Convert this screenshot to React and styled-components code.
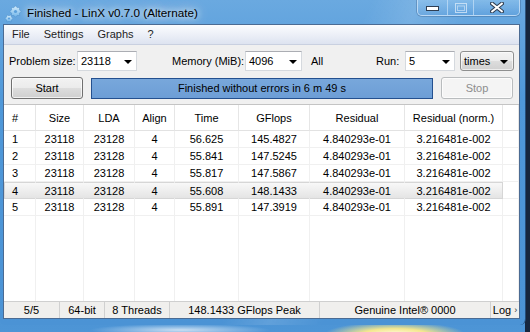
import React from 'react';
import styled, { createGlobalStyle } from 'styled-components';

const GlobalStyle = createGlobalStyle`
  html, body { margin: 0; padding: 0; }
  body {
    width: 530px; height: 332px; overflow: hidden;
    font-family: "Liberation Sans", Arial, sans-serif;
    font-size: 11px; color: #000;
  }
  * { box-sizing: border-box; }
`;

const Desktop = styled.div`
  width: 530px; height: 332px; overflow: hidden;
  background:
    radial-gradient(ellipse 70px 12px at 395px 334px, #fffbe0 0%, #f4e78e 45%, rgba(244,231,142,0) 100%),
    radial-gradient(ellipse 90px 6px at 180px 330px, rgba(255,255,255,0.7) 0%, rgba(255,255,255,0) 100%),
    linear-gradient(90deg, rgba(0,0,0,0) 525px, #16263d 525px),
    linear-gradient(180deg, #3b80c4 0%, #4d95d6 100%);
`;

const Window = styled.div`
  width: 526px; height: 325px;
  display: flex; flex-direction: column;
  padding-bottom: 6px;
  border-radius: 0 0 6px 6px;
  border-right: 1px solid rgba(10, 30, 60, 0.6);
  background:
    linear-gradient(115deg, rgba(255,255,255,0) 55%, rgba(255,255,255,0.12) 62%, rgba(255,255,255,0) 70%),
    linear-gradient(180deg, #6aa9e0 0%, #4f98d9 30%, #4b93d5 100%);
`;

const TitleBar = styled.div`
  height: 24px; flex: none;
  display: flex; align-items: flex-start;
  padding-left: 4px;
`;

const AppIcon = styled.svg`
  width: 18px; height: 18px; margin-top: 5px; flex: none;
`;

const Title = styled.div`
  margin-left: 5px; margin-top: 5px;
  font-size: 11.7px; line-height: 15px; color: #000;
  white-space: nowrap;
  text-shadow: 0 0 6px rgba(255,255,255,0.95), 0 0 12px rgba(255,255,255,0.85), 0 0 16px rgba(255,255,255,0.6);
`;

const Controls = styled.div`
  margin-left: auto; margin-right: 5px;
  display: flex; height: 16px;
  border: 1px solid rgba(200, 225, 248, 0.85); border-top: none;
  border-radius: 0 0 5px 5px;
  overflow: hidden;
  box-shadow: 0 0 0 1px rgba(30, 60, 100, 0.25);
`;

const CtrlButton = styled.div`
  width: ${p => p.$w}px; height: 100%;
  display: flex; align-items: center; justify-content: center;
  background: linear-gradient(180deg, rgba(150, 200, 240, 0.55) 0%, rgba(90, 155, 220, 0.35) 100%);
  & + & { border-left: 1px solid rgba(200, 225, 248, 0.7); }
`;

const Client = styled.div`
  flex: 1; margin: 0 5px 0 3px;
  display: flex; flex-direction: column;
  border: 1px solid #4b6b93;
  background: #f0f0f0;
  min-height: 0;
`;

const MenuBar = styled.div`
  height: 20px; flex: none;
  display: flex; align-items: center;
  padding-left: 1px;
  background: linear-gradient(180deg, #fbfcfe 0%, #eef1f8 45%, #dde3f0 100%);
  border-bottom: 1px solid #c9d0e0;
`;

const MenuItem = styled.span`
  padding: 0 7px; color: #1e1e1e; line-height: 19px;
`;

const Toolbar = styled.div`
  flex: none; display: flex; flex-direction: column;
  gap: 6px; padding: 6px 0 5px;
`;

const Row = styled.div`
  display: flex; align-items: center;
  height: ${p => p.$h}px;
  padding-left: ${p => p.$pl}px;
  gap: ${p => p.$gap || 0}px;
`;

const Label = styled.span`
  width: ${p => p.$w}px; margin-left: ${p => p.$ml || 0}px;
  flex: none; white-space: nowrap; color: #000;
`;

const Combo = styled.div`
  width: ${p => p.$w}px; height: 20px; flex: none;
  display: flex; align-items: center; justify-content: space-between;
  padding: 0 4px 0 3px;
  background: #fff;
  border: 1px solid #d5d9de; border-top-color: #abadb3;
`;

const Arrow = styled.span`
  width: 0; height: 0;
  border-left: 4px solid transparent; border-right: 4px solid transparent;
  border-top: 4px solid #000;
  margin-top: 1px;
`;

const DropList = styled.div`
  width: ${p => p.$w}px; height: 20px; flex: none; margin-left: ${p => p.$ml || 0}px;
  display: flex; align-items: center; justify-content: space-between;
  padding: 0 5px 0 3px;
  border: 1px solid #8e8f8f; border-radius: 3px;
  background: linear-gradient(180deg, #f3f3f3 0%, #ebebeb 50%, #dddddd 51%, #d0d0d0 100%);
  box-shadow: inset 0 0 0 1px rgba(255,255,255,0.6);
`;

const Button = styled.div`
  width: 72px; height: 22px; flex: none;
  display: flex; align-items: center; justify-content: center;
  border-radius: 3px;
  border: 1px solid ${p => (p.$disabled ? '#b9bcbe' : '#707070')};
  color: ${p => (p.$disabled ? '#8d8d8d' : '#000')};
  background: ${p => (p.$disabled
    ? '#f4f4f4'
    : 'linear-gradient(180deg, #f2f2f2 0%, #ebebeb 50%, #dddddd 51%, #cfcfcf 100%)')};
  box-shadow: inset 0 0 0 1px rgba(255,255,255,0.7);
`;

const Progress = styled.div`
  width: 342px; height: 21px; flex: none;
  display: flex; align-items: center; justify-content: center;
  border: 1px solid #24508f;
  background: linear-gradient(180deg, #78a7db 0%, #6d9ed6 100%);
  color: #000;
`;

const COLS = '32px 48px 51px 40px 64px 71px 95px 98px 1fr';

const TableArea = styled.div`
  height: 197px; flex: none;
  display: flex; flex-direction: column;
  background: #fff;
  border-top: 1px solid #c4c4c4;
`;

const GridRow = styled.div`
  display: grid; grid-template-columns: ${COLS};
  height: ${p => p.$h}px; flex: ${p => (p.$fill ? 1 : 'none')};
`;

const HeadCell = styled.div`
  display: flex; align-items: center;
  justify-content: ${p => (p.$left ? 'flex-start' : 'center')};
  padding-left: ${p => (p.$left ? 8 : 0)}px;
  border-right: 1px solid #e6e6e6;
  border-bottom: 1px solid #e2e2e2;
  white-space: nowrap;
`;

const Cell = styled.div`
  display: flex; align-items: center;
  justify-content: ${p => (p.$left ? 'flex-start' : 'center')};
  padding-left: ${p => (p.$left ? 8 : 0)}px;
  border-right: 1px solid #f0f0f0;
  border-bottom: ${p => (p.$noBottom ? 'none' : '1px solid #f0f0f0')};
  white-space: nowrap;
  ${p => p.$sel && `
    background: linear-gradient(180deg, #f8f8f8 0%, #ececec 60%, #e4e4e4 100%);
    border-top: 1px solid #d6d6d6;
    border-bottom: 1px solid #d6d6d6;
    border-right-color: ${p.$selEnd ? '#d6d6d6' : 'transparent'};
    ${p.$left ? 'border-left: 1px solid #d6d6d6; padding-left: 7px;' : ''}
  `}
`;

const StatusBar = styled.div`
  height: 17px; flex: none;
  display: grid; grid-template-columns: 55px 45px 65px 150px 171px 1fr;
  border-top: 1px solid #cfcfcf;
  background: #f0efed;
`;

const StatusCell = styled.div`
  display: flex; align-items: center; justify-content: center;
  white-space: nowrap;
  & + & { border-left: 1px solid #d0d0d0; }
`;

const Chevron = styled.span`
  font-size: 9px; margin-left: 3px; color: #333;
`;

const rows = [
  ['1', '23118', '23128', '4', '56.625', '145.4827', '4.840293e-01', '3.216481e-002'],
  ['2', '23118', '23128', '4', '55.841', '147.5245', '4.840293e-01', '3.216481e-002'],
  ['3', '23118', '23128', '4', '55.817', '147.5867', '4.840293e-01', '3.216481e-002'],
  ['4', '23118', '23128', '4', '55.608', '148.1433', '4.840293e-01', '3.216481e-002'],
  ['5', '23118', '23128', '4', '55.891', '147.3919', '4.840293e-01', '3.216481e-002'],
];

const headers = ['#', 'Size', 'LDA', 'Align', 'Time', 'GFlops', 'Residual', 'Residual (norm.)', ''];

function GearIcon() {
  const gear = (cx, cy, r, teeth, tr) => {
    const pts = [];
    for (let i = 0; i < teeth * 2; i++) {
      const a = (Math.PI * i) / teeth;
      const rad = i % 2 === 0 ? r + tr : r;
      pts.push(`${(cx + rad * Math.cos(a)).toFixed(2)},${(cy + rad * Math.sin(a)).toFixed(2)}`);
    }
    return pts.join(' ');
  };
  return (
    <AppIcon viewBox="0 0 18 18">
      <defs>
        <linearGradient id="gg" x1="0" y1="0" x2="0" y2="1">
          <stop offset="0" stopColor="#d6eefc" />
          <stop offset="1" stopColor="#6fb3e8" />
        </linearGradient>
      </defs>
      <polygon points={gear(11.5, 6.5, 4.2, 8, 1.6)} fill="url(#gg)" stroke="#4c8fca" strokeWidth="0.5" />
      <circle cx="11.5" cy="6.5" r="1.6" fill="#5aa0dc" />
      <polygon points={gear(5, 13.5, 2.8, 6, 1.3)} fill="url(#gg)" stroke="#4c8fca" strokeWidth="0.5" />
      <circle cx="5" cy="13.5" r="1.1" fill="#5aa0dc" />
    </AppIcon>
  );
}

export default function App() {
  return (
    <>
      <GlobalStyle />
      <Desktop>
        <Window>
          <TitleBar>
            <GearIcon />
            <Title>Finished - LinX v0.7.0 (Alternate)</Title>
            <Controls>
              <CtrlButton $w={29}>
                <svg width="13" height="6" viewBox="0 0 13 6">
                  <rect x="0.5" y="1.5" width="12" height="4" fill="#fff" stroke="#2f3e52" />
                </svg>
              </CtrlButton>
              <CtrlButton $w={26}>
                <svg width="12" height="10" viewBox="0 0 12 10">
                  <rect x="0.5" y="0.5" width="11" height="9" fill="none" stroke="rgba(220,235,250,0.75)" />
                  <rect x="2.5" y="3" width="7" height="4.5" fill="none" stroke="rgba(220,235,250,0.6)" />
                </svg>
              </CtrlButton>
              <CtrlButton $w={46}>
                <svg width="14" height="11" viewBox="0 0 14 11">
                  <path d="M2 1.5 L12 9.5 M12 1.5 L2 9.5" stroke="#2f3e52" strokeWidth="4" strokeLinecap="square" />
                  <path d="M2.2 1.7 L11.8 9.3 M11.8 1.7 L2.2 9.3" stroke="#fff" strokeWidth="2" strokeLinecap="square" />
                </svg>
              </CtrlButton>
            </Controls>
          </TitleBar>
          <Client>
            <MenuBar>
              <MenuItem>File</MenuItem>
              <MenuItem>Settings</MenuItem>
              <MenuItem>Graphs</MenuItem>
              <MenuItem>?</MenuItem>
            </MenuBar>
            <Toolbar>
              <Row $h={20} $pl={5}>
                <Label $w={68}>Problem size:</Label>
                <Combo $w={60}><span>23118</span><Arrow /></Combo>
                <Label $w={73} $ml={35}>Memory (MiB):</Label>
                <Combo $w={57}><span>4096</span><Arrow /></Combo>
                <Label $w={65} $ml={9}>All</Label>
                <Label $w={29}>Run:</Label>
                <Combo $w={50}><span>5</span><Arrow /></Combo>
                <DropList $w={54} $ml={5}><span>times</span><Arrow /></DropList>
              </Row>
              <Row $h={22} $pl={7} $gap={8}>
                <Button>Start</Button>
                <Progress>Finished without errors in 6 m 49 s</Progress>
                <Button $disabled>Stop</Button>
              </Row>
            </Toolbar>
            <TableArea>
              <GridRow $h={26}>
                {headers.map((h, i) => (
                  <HeadCell key={i} $left={i === 0}>{h}</HeadCell>
                ))}
              </GridRow>
              {rows.map((r, ri) => {
                const sel = ri === 3;
                return (
                  <GridRow key={ri} $h={17}>
                    {r.map((c, ci) => (
                      <Cell key={ci} $left={ci === 0} $sel={sel} $selEnd={ci === 7}>{c}</Cell>
                    ))}
                    <Cell />
                  </GridRow>
                );
              })}
              <GridRow $fill>
                {headers.map((_, i) => <Cell key={i} $noBottom />)}
              </GridRow>
            </TableArea>
            <StatusBar>
              <StatusCell>5/5</StatusCell>
              <StatusCell>64-bit</StatusCell>
              <StatusCell>8 Threads</StatusCell>
              <StatusCell>148.1433 GFlops Peak</StatusCell>
              <StatusCell>Genuine Intel® 0000</StatusCell>
              <StatusCell>Log<Chevron>›</Chevron></StatusCell>
            </StatusBar>
          </Client>
        </Window>
      </Desktop>
    </>
  );
}
